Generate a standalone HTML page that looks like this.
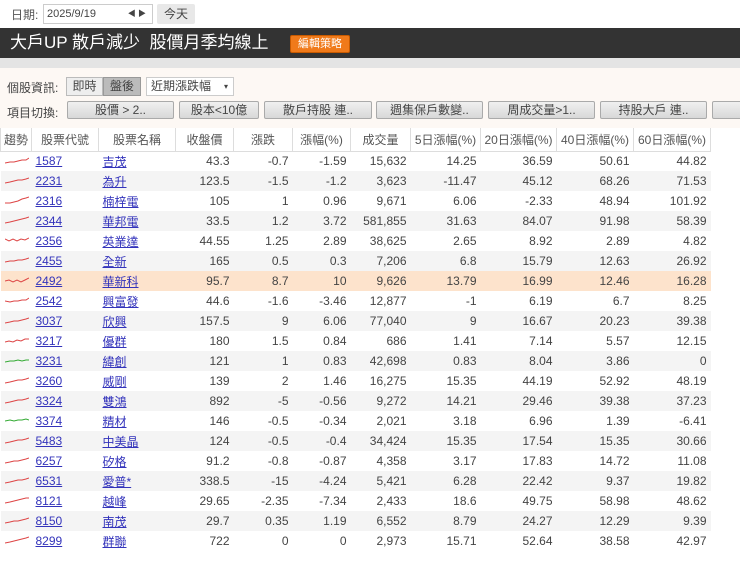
<!DOCTYPE html>
<html><head><meta charset="utf-8"><style>
*{margin:0;padding:0;box-sizing:border-box}
body{width:740px;height:568px;overflow:hidden;background:#fff;font-family:"Liberation Sans","Noto Sans CJK TC",sans-serif;color:#444;font-size:12px;position:relative}
.top{position:absolute;left:0;top:0;width:740px;height:28px;background:#fff}
.abs{position:absolute}
.hdr{position:absolute;left:0;top:28px;width:740px;height:30px;background:#333;color:#fff;font-size:17px;line-height:30px;padding-left:10px;white-space:nowrap}
.btnor{position:absolute;left:290px;top:35px;width:60px;height:18px;background:#f07a1a;border:1px solid #c85a00;border-radius:2px;color:#fff;font-size:11px;text-align:center;line-height:16px}
.gray{position:absolute;left:0;top:58px;width:740px;height:10px;background:#e4e4e4}
.panel{position:absolute;left:0;top:68px;width:740px;height:60px;background:#fdf8f4}
.b{position:absolute;height:18px;border:1px solid #aaa;border-radius:2px;background:linear-gradient(#f0f0f0,#d8d8d8);text-align:center;line-height:16px;font-size:12px;color:#444}
table{position:absolute;left:0;top:128px;border-collapse:collapse;table-layout:fixed;width:710px}
th{height:23px;font-weight:normal;border:1px solid #ddd;border-top:0;background:#fff;color:#555;font-size:12px}
td{height:20px;text-align:right;padding-right:4px;font-size:12px;white-space:nowrap;color:#444}
tr.g td{background:#f4f4f4}
tr.h td{background:#fde3cc}
td.l{text-align:left;padding-left:4px}
td a{color:#3333bb;text-decoration:underline}
td.s{padding:0 0 0 4px;text-align:left}
</style></head><body>
<div class="top">
<div class="abs" style="left:11px;top:6px;color:#555">日期:</div>
<div class="abs" style="left:43px;top:4px;width:110px;height:20px;border:1px solid #ccc;background:#fff;font-size:11px;line-height:18px;padding-left:3px">2025/9/19<span style="position:absolute;right:6px;font-size:8px">◀ ▶</span></div>
<div class="abs" style="left:157px;top:4px;width:38px;height:20px;background:#e8e8e8;border-radius:2px;text-align:center;line-height:20px">今天</div>
</div>
<div class="hdr">大戶UP 散戶減少 &nbsp;股價月季均線上</div>
<div class="btnor">編輯策略</div>
<div class="gray"></div>
<div class="panel">
<div class="abs" style="left:7px;top:11px">個股資訊:</div>
<div class="abs" style="left:66px;top:9px;width:37px;height:19px;border:1px solid #bbb;background:#eee;text-align:center;line-height:17px">即時</div>
<div class="abs" style="left:103px;top:9px;width:38px;height:19px;border:1px solid #999;background:#bbb;text-align:center;line-height:17px">盤後</div>
<div class="abs" style="left:146px;top:9px;width:88px;height:19px;border:1px solid #ccc;background:#fff;line-height:17px;padding-left:4px">近期漲跌幅 <span style="position:absolute;right:5px;font-size:8px">▾</span></div>
<div class="abs" style="left:7px;top:36px">項目切換:</div>
<div class="b" style="left:67px;top:33px;width:107px">股價 &gt; 2..</div>
<div class="b" style="left:179px;top:33px;width:80px">股本&lt;10億</div>
<div class="b" style="left:264px;top:33px;width:108px">散戶持股 連..</div>
<div class="b" style="left:376px;top:33px;width:107px">週集保戶數變..</div>
<div class="b" style="left:488px;top:33px;width:107px">周成交量&gt;1..</div>
<div class="b" style="left:600px;top:33px;width:107px">持股大戶 連..</div>
<div class="b" style="left:712px;top:33px;width:40px"></div>
</div>
<table>
<colgroup><col style="width:31px"><col style="width:67px"><col style="width:77px"><col style="width:58px"><col style="width:59px"><col style="width:58px"><col style="width:60px"><col style="width:70px"><col style="width:76px"><col style="width:77px"><col style="width:77px"></colgroup>
<tr><th>趨勢</th><th>股票代號</th><th>股票名稱</th><th>收盤價</th><th>漲跌</th><th>漲幅(%)</th><th>成交量</th><th>5日漲幅(%)</th><th>20日漲幅(%)</th><th>40日漲幅(%)</th><th>60日漲幅(%)</th></tr>
<tbody id="tb">
<tr><td class="s"><svg width="24" height="10"><polyline points="0,8 5,7 9,7 13,6 17,5 21,5 24,3" fill="none" stroke="#d44" stroke-width="1"/></svg></td><td class="l"><a>1587</a></td><td class="l"><a>吉茂</a></td><td>43.3</td><td>-0.7</td><td>-1.59</td><td>15,632</td><td>14.25</td><td>36.59</td><td>50.61</td><td>44.82</td></tr>
<tr class="g"><td class="s"><svg width="24" height="10"><polyline points="0,8 5,7 9,6 13,5 17,5 21,4 24,3" fill="none" stroke="#d44"/></svg></td><td class="l"><a>2231</a></td><td class="l"><a>為升</a></td><td>123.5</td><td>-1.5</td><td>-1.2</td><td>3,623</td><td>-11.47</td><td>45.12</td><td>68.26</td><td>71.53</td></tr>
<tr><td class="s"><svg width="24" height="10"><polyline points="0,8 5,8 9,7 13,6 17,4 21,3 24,2" fill="none" stroke="#d44"/></svg></td><td class="l"><a>2316</a></td><td class="l"><a>楠梓電</a></td><td>105</td><td>1</td><td>0.96</td><td>9,671</td><td>6.06</td><td>-2.33</td><td>48.94</td><td>101.92</td></tr>
<tr class="g"><td class="s"><svg width="24" height="10"><polyline points="0,8 5,7 9,6 13,5 17,4 21,3 24,2" fill="none" stroke="#d44"/></svg></td><td class="l"><a>2344</a></td><td class="l"><a>華邦電</a></td><td>33.5</td><td>1.2</td><td>3.72</td><td>581,855</td><td>31.63</td><td>84.07</td><td>91.98</td><td>58.39</td></tr>
<tr><td class="s"><svg width="24" height="10"><polyline points="0,4 4,6 8,4 12,6 16,4 20,5 24,3" fill="none" stroke="#d44"/></svg></td><td class="l"><a>2356</a></td><td class="l"><a>英業達</a></td><td>44.55</td><td>1.25</td><td>2.89</td><td>38,625</td><td>2.65</td><td>8.92</td><td>2.89</td><td>4.82</td></tr>
<tr class="g"><td class="s"><svg width="24" height="10"><polyline points="0,7 5,6 9,6 13,5 17,5 21,4 24,3" fill="none" stroke="#d44"/></svg></td><td class="l"><a>2455</a></td><td class="l"><a>全新</a></td><td>165</td><td>0.5</td><td>0.3</td><td>7,206</td><td>6.8</td><td>15.79</td><td>12.63</td><td>26.92</td></tr>
<tr class="h"><td class="s"><svg width="24" height="10"><polyline points="0,6 4,5 8,7 12,5 16,7 20,5 24,3" fill="none" stroke="#d44"/></svg></td><td class="l"><a>2492</a></td><td class="l"><a>華新科</a></td><td>95.7</td><td>8.7</td><td>10</td><td>9,626</td><td>13.79</td><td>16.99</td><td>12.46</td><td>16.28</td></tr>
<tr><td class="s"><svg width="24" height="10"><polyline points="0,6 5,7 9,6 13,6 17,5 21,5 24,3" fill="none" stroke="#d44"/></svg></td><td class="l"><a>2542</a></td><td class="l"><a>興富發</a></td><td>44.6</td><td>-1.6</td><td>-3.46</td><td>12,877</td><td>-1</td><td>6.19</td><td>6.7</td><td>8.25</td></tr>
<tr class="g"><td class="s"><svg width="24" height="10"><polyline points="0,8 5,7 9,6 13,6 17,5 21,4 24,3" fill="none" stroke="#d44"/></svg></td><td class="l"><a>3037</a></td><td class="l"><a>欣興</a></td><td>157.5</td><td>9</td><td>6.06</td><td>77,040</td><td>9</td><td>16.67</td><td>20.23</td><td>39.38</td></tr>
<tr><td class="s"><svg width="24" height="10"><polyline points="0,7 4,6 8,7 12,5 16,6 20,4 24,4" fill="none" stroke="#d44"/></svg></td><td class="l"><a>3217</a></td><td class="l"><a>優群</a></td><td>180</td><td>1.5</td><td>0.84</td><td>686</td><td>1.41</td><td>7.14</td><td>5.57</td><td>12.15</td></tr>
<tr class="g"><td class="s"><svg width="24" height="10"><polyline points="0,7 5,6 9,6 13,5 17,6 21,5 24,5" fill="none" stroke="#3a3"/></svg></td><td class="l"><a>3231</a></td><td class="l"><a>緯創</a></td><td>121</td><td>1</td><td>0.83</td><td>42,698</td><td>0.83</td><td>8.04</td><td>3.86</td><td>0</td></tr>
<tr><td class="s"><svg width="24" height="10"><polyline points="0,8 5,7 9,6 13,5 17,5 21,4 24,3" fill="none" stroke="#d44"/></svg></td><td class="l"><a>3260</a></td><td class="l"><a>威剛</a></td><td>139</td><td>2</td><td>1.46</td><td>16,275</td><td>15.35</td><td>44.19</td><td>52.92</td><td>48.19</td></tr>
<tr class="g"><td class="s"><svg width="24" height="10"><polyline points="0,8 5,7 9,6 13,5 17,5 21,4 24,3" fill="none" stroke="#d44"/></svg></td><td class="l"><a>3324</a></td><td class="l"><a>雙鴻</a></td><td>892</td><td>-5</td><td>-0.56</td><td>9,272</td><td>14.21</td><td>29.46</td><td>39.38</td><td>37.23</td></tr>
<tr><td class="s"><svg width="24" height="10"><polyline points="0,6 5,5 9,6 13,5 17,5 21,4 24,5" fill="none" stroke="#3a3"/></svg></td><td class="l"><a>3374</a></td><td class="l"><a>精材</a></td><td>146</td><td>-0.5</td><td>-0.34</td><td>2,021</td><td>3.18</td><td>6.96</td><td>1.39</td><td>-6.41</td></tr>
<tr class="g"><td class="s"><svg width="24" height="10"><polyline points="0,8 5,7 9,6 13,5 17,5 21,4 24,3" fill="none" stroke="#d44"/></svg></td><td class="l"><a>5483</a></td><td class="l"><a>中美晶</a></td><td>124</td><td>-0.5</td><td>-0.4</td><td>34,424</td><td>15.35</td><td>17.54</td><td>15.35</td><td>30.66</td></tr>
<tr><td class="s"><svg width="24" height="10"><polyline points="0,8 5,7 9,6 13,6 17,5 21,4 24,3" fill="none" stroke="#d44"/></svg></td><td class="l"><a>6257</a></td><td class="l"><a>矽格</a></td><td>91.2</td><td>-0.8</td><td>-0.87</td><td>4,358</td><td>3.17</td><td>17.83</td><td>14.72</td><td>11.08</td></tr>
<tr class="g"><td class="s"><svg width="24" height="10"><polyline points="0,8 5,7 9,6 13,5 17,5 21,4 24,3" fill="none" stroke="#d44"/></svg></td><td class="l"><a>6531</a></td><td class="l"><a>愛普*</a></td><td>338.5</td><td>-15</td><td>-4.24</td><td>5,421</td><td>6.28</td><td>22.42</td><td>9.37</td><td>19.82</td></tr>
<tr><td class="s"><svg width="24" height="10"><polyline points="0,8 5,7 9,6 13,5 17,4 21,3 24,3" fill="none" stroke="#d44"/></svg></td><td class="l"><a>8121</a></td><td class="l"><a>越峰</a></td><td>29.65</td><td>-2.35</td><td>-7.34</td><td>2,433</td><td>18.6</td><td>49.75</td><td>58.98</td><td>48.62</td></tr>
<tr class="g"><td class="s"><svg width="24" height="10"><polyline points="0,8 5,7 9,6 13,6 17,5 21,4 24,3" fill="none" stroke="#d44"/></svg></td><td class="l"><a>8150</a></td><td class="l"><a>南茂</a></td><td>29.7</td><td>0.35</td><td>1.19</td><td>6,552</td><td>8.79</td><td>24.27</td><td>12.29</td><td>9.39</td></tr>
<tr><td class="s"><svg width="24" height="10"><polyline points="0,8 5,7 9,6 13,5 17,4 21,3 24,2" fill="none" stroke="#d44"/></svg></td><td class="l"><a>8299</a></td><td class="l"><a>群聯</a></td><td>722</td><td>0</td><td>0</td><td>2,973</td><td>15.71</td><td>52.64</td><td>38.58</td><td>42.97</td></tr>
</tbody></table>
</body></html>
